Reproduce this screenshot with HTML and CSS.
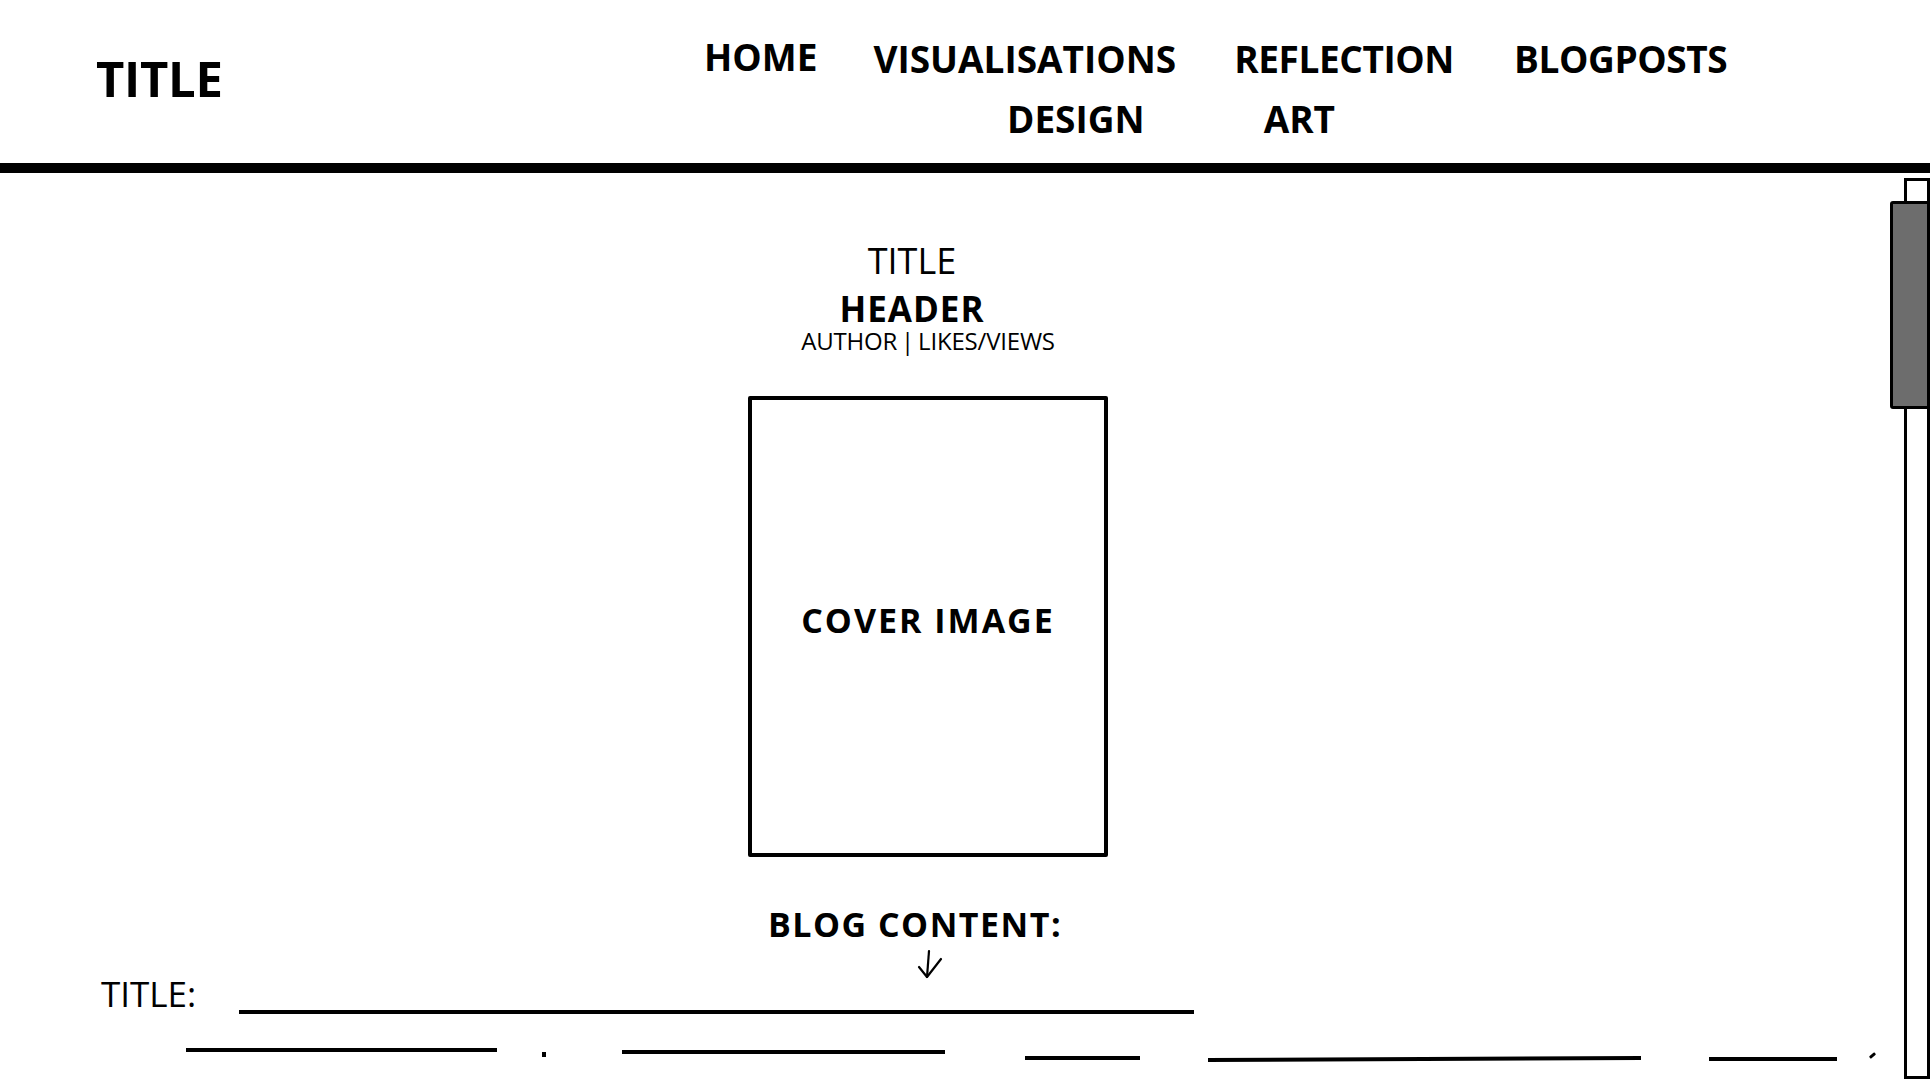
FILE: index.html
```html
<!DOCTYPE html>
<html>
<head>
    <title>Blog Post Wireframe</title>
    <link rel="stylesheet" href="styles.css">
</head>
<body>
    <header class="topbar">
        <div class="logo">TITLE</div>
        <nav class="nav">
            <div class="nav-row nav-row-top">
                <a class="nav-home">HOME</a>
                <a class="nav-vis">VISUALISATIONS</a>
                <a class="nav-ref">REFLECTION</a>
                <a class="nav-blog">BLOGPOSTS</a>
            </div>
            <div class="nav-row nav-row-bottom">
                <a>DESIGN</a>
                <a>ART</a>
            </div>
        </nav>
    </header>

    <div class="page">
        <main class="post">
            <div class="post-head">
                <div class="kicker">TITLE</div>
                <h1 class="headline">HEADER</h1>
                <div class="byline">AUTHOR | LIKES/VIEWS</div>

                <div class="cover"><span>COVER IMAGE</span></div>

                <h2 class="content-label">BLOG CONTENT:</h2>
                <svg class="down-arrow" width="26" height="28" viewBox="0 0 26 28">
                    <path d="M12 0 L10 26" />
                    <path d="M2 16 L10 26 L24 8" />
                </svg>
            </div>

            <div class="title-row">
                <span class="title-label">TITLE:</span>
                <div class="rule title-rule"></div>
            </div>

            <div class="text-row">
                <div class="rule seg-a"></div>
                <div class="rule seg-dot"></div>
                <div class="rule seg-b"></div>
                <div class="rule seg-c"></div>
                <div class="rule seg-d"></div>
                <div class="rule seg-e"></div>
                <div class="rule seg-tick"></div>
            </div>
        </main>

        <aside class="scrollbar">
            <div class="track"></div>
            <div class="thumb"></div>
        </aside>
    </div>
</body>
</html>
```

FILE: styles.css
```css
body {
    margin: 0;
    height: 1080px;
    overflow: hidden;
    background: #fff;
    color: #000;
    font-family: "Open Sans", "Liberation Sans", sans-serif;
}

/* header */
.topbar {
    display: flex;
    align-items: flex-start;
    height: 163px;
    padding-left: 96px;
    border-bottom: 10px solid #000;
}

.logo {
    flex: 0 0 608px;
    margin-top: 53px;
    font-size: 49px;
    font-weight: 700;
    line-height: 50px;
    letter-spacing: -0.3px;
}

.nav {
    margin-top: 29px;
    font-size: 37px;
    font-weight: 700;
    line-height: 60px;
}

.nav-row {
    display: flex;
    align-items: flex-start;
}

.nav-row a {
    color: #000;
    text-decoration: none;
}

.nav-home {
    margin-top: -2px;
}

.nav-vis {
    margin-left: 56px;
}

.nav-ref {
    margin-left: 58px;
    letter-spacing: -0.4px;
}

.nav-blog {
    margin-left: 60px;
    letter-spacing: -0.4px;
}

.nav-row-bottom {
    padding-left: 303px;
    gap: 119px;
}

/* page body */
.page {
    display: flex;
    height: 907px;
}

.post {
    flex: 1;
    padding-top: 64px;
}

.post-head {
    display: flex;
    flex-direction: column;
    align-items: center;
    padding-right: 34px;
}

.kicker {
    margin-right: 32px;
    margin-bottom: 4px;
    font-size: 36px;
    line-height: 48px;
}

.headline {
    margin: 0 32px 0 0;
    font-size: 35px;
    font-weight: 700;
    line-height: 40px;
    letter-spacing: 1px;
}

.byline {
    font-size: 24px;
    line-height: 24px;
    letter-spacing: -0.2px;
    word-spacing: -2px;
}

.cover {
    display: flex;
    align-items: center;
    justify-content: center;
    box-sizing: border-box;
    width: 360px;
    height: 461px;
    margin-top: 43px;
    padding-bottom: 14px;
    border: 4px solid #000;
    border-radius: 2px;
    font-size: 34px;
    font-weight: 700;
    line-height: 40px;
    letter-spacing: 2px;
}

.content-label {
    margin: 47px 26px 0 0;
    font-size: 34px;
    font-weight: 700;
    line-height: 40px;
    letter-spacing: 1.5px;
}

.down-arrow {
    margin: 7px 0 -4px 4px;
    overflow: visible;
}

.down-arrow path {
    fill: none;
    stroke: #000;
    stroke-width: 2.2;
    stroke-linecap: round;
    stroke-linejoin: round;
}

/* sketched text lines */
.rule {
    height: 4px;
    background: #000;
}

.title-row {
    display: flex;
    align-items: flex-start;
    padding-left: 101px;
}

.title-label {
    flex: 0 0 138px;
    font-size: 35px;
    line-height: 38px;
}

.title-rule {
    width: 955px;
    margin-top: 35px;
}

.text-row {
    display: flex;
    align-items: flex-start;
    margin-top: 33px;
}

.seg-a {
    width: 311px;
    margin: 1px 0 0 186px;
}

.seg-dot {
    width: 4px;
    height: 5px;
    margin: 5px 0 0 45px;
}

.seg-b {
    width: 323px;
    margin: 3px 0 0 76px;
}

.seg-c {
    width: 115px;
    margin: 9px 0 0 80px;
}

.seg-d {
    width: 433px;
    margin: 10px 0 0 68px;
    transform: rotate(-0.25deg);
}

.seg-e {
    width: 128px;
    margin: 10px 0 0 68px;
}

.seg-tick {
    width: 7px;
    height: 3px;
    margin: 7px 0 0 32px;
    border-radius: 1px;
    transform: rotate(-40deg);
}

/* drawn scrollbar */
.scrollbar {
    position: relative;
    flex: 0 0 40px;
}

.track {
    box-sizing: border-box;
    width: 26px;
    height: 901px;
    margin: 5px 0 0 14px;
    border: 3px solid #000;
    background: #fff;
}

.thumb {
    position: absolute;
    top: 28px;
    left: 0;
    box-sizing: border-box;
    width: 40px;
    height: 208px;
    border: 3px solid #000;
    border-radius: 3px;
    background: #6d6d6d;
}
```
